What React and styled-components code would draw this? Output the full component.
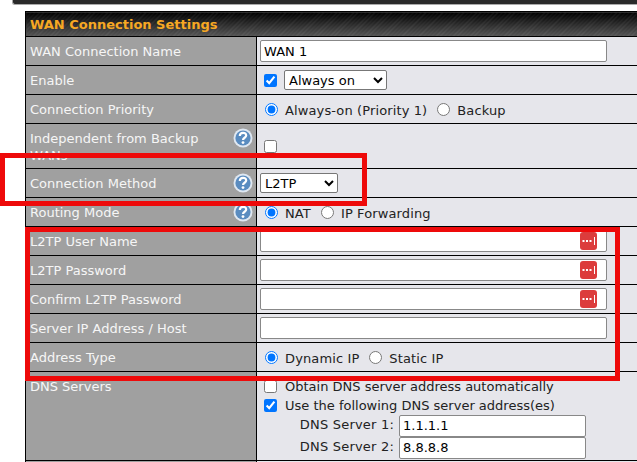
import styled, {createGlobalStyle} from "styled-components";

const GlobalStyle = createGlobalStyle`
  html, body {
    margin: 0;
    padding: 0;
    background: #fff;
    overflow: hidden;
  }
  #root {
    height: 462px;
    overflow: hidden;
  }
`;

const Page = styled.div`
  position: relative;
  width: 637px;
  height: 462px;
  overflow: hidden;
  font-family: "DejaVu Sans", sans-serif;
  font-size: 13px;
  color: #222;
`;
const TopBar = styled.div`
  height: 4px;
  margin-left: 12px;
  background: #2a2a2a;
  border-bottom: 1px solid #aaa;
  border-left: 1px solid #aaa;
  border-bottom-left-radius: 3px;
`;
const Table = styled.table`
  margin: 6px 0 0 25px;
  width: 680px;
  table-layout: fixed;
  border-collapse: collapse;
`;
const HeadCell = styled.th`
  height: 24px;
  padding: 0 0 0 4px;
  text-align: left;
  font-size: 13px;
  font-weight: bold;
  color: #f7a823;
  border: 1px solid #000;
  background:
    repeating-linear-gradient(135deg, rgba(255,255,255,.07) 0 1px, transparent 1px 3px),
    linear-gradient(#000, #555);
`;
const Row = styled.tr`
  height: ${props => props.$height || 29}px;
`;
const Label = styled.td`
  position: relative;
  width: 230px;
  box-sizing: border-box;
  padding: ${props => props.$top ? "6px" : "0"} 26px 0 4px;
  vertical-align: ${props => props.$top ? "top" : "middle"};
  line-height: 17px;
  color: #f6f6f6;
  background: #a0a0a0;
  border: 1px solid #000;
`;
const Value = styled.td`
  padding: ${props => props.$pushed ? "4px" : "0"} 0 0 3px;
  vertical-align: middle;
  background: #e6e6eb;
  border: 1px solid #000;
`;
const Inline = styled.div`
  display: flex;
  align-items: center;
  gap: 7px;
`;
const ChoiceRow = styled(Inline)`
  gap: 4px;
  padding-top: 2px;
  letter-spacing: .12px;
`;
const Choice = styled.label`
  display: flex;
  align-items: center;
  gap: 7px;
  margin-right: 1px;
`;
const Radio = styled.input.attrs({type: "radio"})`
  margin: 0 0 0 5px;
  width: 13px;
  height: 13px;
  position: relative;
  top: -1px;
`;
const Check = styled.input.attrs({type: "checkbox"})`
  margin: 0 0 0 4px;
  width: 13px;
  height: 13px;
`;
const TextBox = styled.input`
  box-sizing: border-box;
  display: block;
  width: ${props => props.$width || 347}px;
  height: 22px;
  padding: 0 3px;
  font: 13px "DejaVu Sans", sans-serif;
  color: #000;
  background: #fff;
  border: 1px solid #888;
  border-radius: 2px;
`;
const Select = styled.select`
  box-sizing: border-box;
  width: ${props => props.$width}px;
  height: 20px;
  font: 13px "DejaVu Sans", sans-serif;
  background: #fff;
  color: #000;
  border: 1px solid #777;
  border-radius: 2px;
`;
const PasswordWrap = styled.div`
  position: relative;
  width: 347px;
`;
const KeyButton = styled.span`
  position: absolute;
  top: 2px;
  right: 10px;
  width: 17px;
  height: 18px;
  display: flex;
  align-items: center;
  justify-content: center;
  background: #dc3c3c;
  border-radius: 3px;
`;
const Help = styled.span`
  position: absolute;
  right: 3px;
  top: ${props => props.$top}px;
  display: flex;
`;
const DnsBlock = styled.div`
  display: flex;
  flex-direction: column;
  padding-top: 3px;
`;
const DnsLine = styled.label`
  height: 19px;
  display: flex;
  align-items: center;
  gap: 8px;
`;
const DnsServer = styled.div`
  height: 22px;
  display: flex;
  align-items: center;
  justify-content: flex-end;
  gap: 5px;
  width: 326px;
`;
const DnsLabel = styled.span`
  padding-bottom: 2px;
  letter-spacing: .2px;
`;
const Marker = styled.div`
  position: absolute;
  left: ${props => props.$left}px;
  top: ${props => props.$top}px;
  width: ${props => props.$width}px;
  height: ${props => props.$height}px;
  border: 5px solid #ee0a0a;
  box-sizing: border-box;
  pointer-events: none;
`;

function HelpIcon({top}) {
  return (
    <Help $top={top}>
      <svg width="20" height="20" viewBox="0 0 20 20">
        <circle cx="10" cy="10" r="9.5" fill="#dfe8f2"/>
        <circle cx="10" cy="10" r="7.6" fill="#5a8cc0"/>
        <path d="M6.800 8c0-4.200 6.400-4.200 6.400-.5 0 2.200-3.200 2.300-3.200 4.500" fill="none" stroke="#fff" strokeWidth="2.200"/>
        <circle cx="10" cy="14.600" r="1.400" fill="#fff"/>
      </svg>
    </Help>
  );
}

function PasswordField() {
  return (
    <PasswordWrap>
      <TextBox type="text" readOnly/>
      <KeyButton>
        <svg width="15" height="10" viewBox="0 0 15 10">
          <rect x="1.500" y="4" width="2" height="2" fill="#fff"/>
          <rect x="5" y="4" width="2" height="2" fill="#fff"/>
          <rect x="8.500" y="4" width="2" height="2" fill="#fff"/>
          <rect x="13" y="1" width="1" height="8" fill="#fff"/>
        </svg>
      </KeyButton>
    </PasswordWrap>
  );
}

export default function App() {
  return (
    <Page>
      <GlobalStyle/>
      <TopBar/>
      <Table>
        <colgroup>
          <col width="231"/>
          <col/>
        </colgroup>
        <tbody>
          <tr><HeadCell colSpan={2}>WAN Connection Settings</HeadCell></tr>
          <Row>
            <Label>WAN Connection Name</Label>
            <Value><TextBox type="text" defaultValue="WAN 1"/></Value>
          </Row>
          <Row>
            <Label>Enable</Label>
            <Value>
              <Inline>
                <Check defaultChecked/>
                <Select $width={103} defaultValue="Always on">
                  <option>Always on</option>
                </Select>
              </Inline>
            </Value>
          </Row>
          <Row>
            <Label>Connection Priority</Label>
            <Value>
              <ChoiceRow>
                <Choice><Radio name="priority" defaultChecked/>Always-on (Priority 1)</Choice>
                <Choice><Radio name="priority"/>Backup</Choice>
              </ChoiceRow>
            </Value>
          </Row>
          <Row $height={45}>
            <Label $top>Independent from Backup WANs<HelpIcon top={4}/></Label>
            <Value $pushed><Check/></Value>
          </Row>
          <Row>
            <Label>Connection Method<HelpIcon top={4}/></Label>
            <Value>
              <Select $width={78} defaultValue="L2TP"><option>L2TP</option></Select>
            </Value>
          </Row>
          <Row>
            <Label>Routing Mode<HelpIcon top={4}/></Label>
            <Value>
              <ChoiceRow>
                <Choice><Radio name="routing" defaultChecked/>NAT</Choice>
                <Choice><Radio name="routing"/>IP Forwarding</Choice>
              </ChoiceRow>
            </Value>
          </Row>
          <Row>
            <Label>L2TP User Name</Label>
            <Value><PasswordField/></Value>
          </Row>
          <Row>
            <Label>L2TP Password</Label>
            <Value><PasswordField/></Value>
          </Row>
          <Row>
            <Label>Confirm L2TP Password</Label>
            <Value><PasswordField/></Value>
          </Row>
          <Row>
            <Label>Server IP Address / Host</Label>
            <Value><TextBox type="text"/></Value>
          </Row>
          <Row>
            <Label>Address Type</Label>
            <Value>
              <ChoiceRow>
                <Choice><Radio name="address" defaultChecked/>Dynamic IP</Choice>
                <Choice><Radio name="address"/>Static IP</Choice>
              </ChoiceRow>
            </Value>
          </Row>
          <Row $height={89}>
            <Label $top>DNS Servers</Label>
            <Value>
              <DnsBlock>
                <DnsLine><Check/>Obtain DNS server address automatically</DnsLine>
                <DnsLine><Check defaultChecked/>Use the following DNS server address(es)</DnsLine>
                <DnsServer><DnsLabel>DNS Server 1:</DnsLabel><TextBox type="text" $width={187} defaultValue="1.1.1.1"/></DnsServer>
                <DnsServer><DnsLabel>DNS Server 2:</DnsLabel><TextBox type="text" $width={187} defaultValue="8.8.8.8"/></DnsServer>
              </DnsBlock>
            </Value>
          </Row>
          <Row>
            <Label/>
            <Value/>
          </Row>
        </tbody>
      </Table>
      <Marker $left={0} $top={153} $width={367} $height={53}/>
      <Marker $left={25} $top={227} $width={595} $height={154}/>
    </Page>
  );
}
